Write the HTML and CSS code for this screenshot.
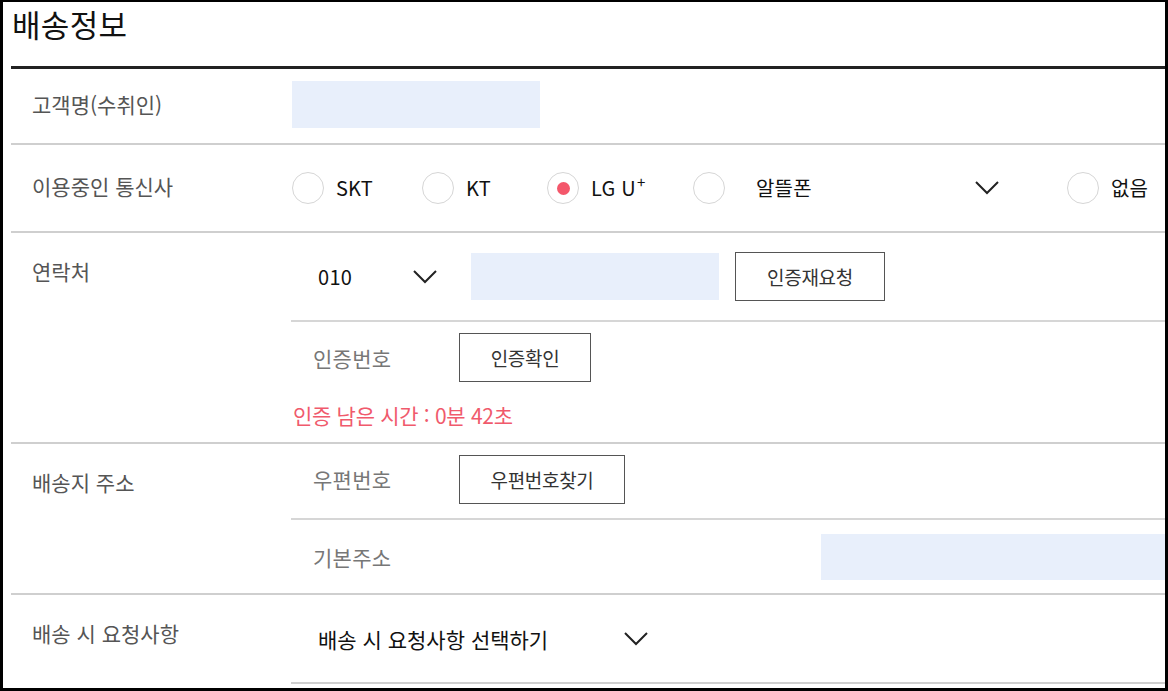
FILE: index.html
```html
<!DOCTYPE html>
<html lang="ko">
<head>
<meta charset="utf-8">
<title>배송정보</title>
<link rel="stylesheet" href="styles.css">
</head>
<body>
<div class="frame">
  <h1 class="title">배송정보</h1>
  <div class="table">
    <div class="row row-name">
      <div class="label label-name">고객명(수취인)</div>
      <div class="cell cell-name"><div class="input input-name"></div></div>
    </div>
    <div class="row row-carrier">
      <div class="label label-carrier">이용중인 통신사</div>
      <div class="cell cell-carrier">
        <label class="opt opt-skt"><span class="radio"></span><span class="opt-text">SKT</span></label>
        <label class="opt opt-kt"><span class="radio"></span><span class="opt-text">KT</span></label>
        <label class="opt opt-lg"><span class="radio checked"></span><span class="opt-text">LG U<sup>+</sup></span></label>
        <label class="opt opt-mvno"><span class="radio"></span><span class="opt-text mvno-text">알뜰폰</span>
          <svg class="chev" width="24" height="14" viewBox="0 0 24 14"><polyline points="1,1 12,12 23,1" fill="none" stroke="#222" stroke-width="2"/></svg>
        </label>
        <label class="opt opt-none"><span class="radio"></span><span class="opt-text">없음</span></label>
      </div>
    </div>
    <div class="row row-contact">
      <div class="label label-top">연락처</div>
      <div class="cell cell-stack">
        <div class="sub sub-phone">
          <div class="select select-phone"><span class="select-text">010</span>
            <svg class="chev" width="24" height="14" viewBox="0 0 24 14"><polyline points="1,1 12,12 23,1" fill="none" stroke="#222" stroke-width="2"/></svg>
          </div>
          <div class="input input-phone"></div>
          <button class="btn btn-resend">인증재요청</button>
        </div>
        <div class="sub sub-code">
          <div class="sub-line">
            <span class="sublabel">인증번호</span>
            <button class="btn btn-confirm">인증확인</button>
          </div>
          <p class="timer">인증 남은 시간 : 0분 42초</p>
        </div>
      </div>
    </div>
    <div class="row row-address">
      <div class="label label-top">배송지 주소</div>
      <div class="cell cell-stack">
        <div class="sub sub-zip">
          <span class="sublabel">우편번호</span>
          <button class="btn btn-zip">우편번호찾기</button>
        </div>
        <div class="sub sub-base">
          <span class="sublabel">기본주소</span>
          <div class="input input-addr"></div>
        </div>
      </div>
    </div>
    <div class="row row-request">
      <div class="label label-top">배송 시 요청사항</div>
      <div class="cell cell-request">
        <div class="select select-request"><span class="select-text request-text">배송 시 요청사항 선택하기</span>
          <svg class="chev" width="24" height="14" viewBox="0 0 24 14"><polyline points="1,1 12,12 23,1" fill="none" stroke="#222" stroke-width="2"/></svg>
        </div>
      </div>
    </div>
  </div>
</div>
</body>
</html>
```
FILE: styles.css
```css
* { box-sizing: border-box; }
html, body { margin: 0; padding: 0; background: #fff; }
body { font-family: "Noto Sans CJK KR", "Noto Sans", sans-serif; color: #111; }

.frame {
  width: 1168px;
  height: 691px;
  border-style: solid;
  border-color: #000;
  border-width: 2px 3px 3px 3px;
  overflow: hidden;
}

.title {
  margin: 0;
  height: 64px;
  padding-left: 9px;
  font-size: 31px;
  line-height: 44px;
  font-weight: 400;
  color: #111;
  letter-spacing: 0.3px;
}

.table {
  margin-left: 8px;
  border-top: 3px solid #222;
}

.row {
  display: flex;
  border-bottom: 2px solid #cfcfcf;
}

.label {
  width: 280px;
  flex: none;
  padding-left: 21px;
  font-size: 21px;
  line-height: 28px;
  color: #555;
}
.label-name { padding-top: 21px; }
.label-carrier { padding-top: 27px; }
.label-top { padding-top: 24px; }

.cell { flex: 1; display: flex; }

.row-name { height: 76px; }
.cell-name { padding: 12px 0 0 1px; }

.input { background: #e8effb; }
.input-name { width: 248px; height: 47px; }

.row-carrier { height: 88px; }
.cell-carrier { align-items: center; padding-left: 1px; }
.opt { display: flex; align-items: center; flex: none; }
.opt-skt { width: 130px; }
.opt-kt { width: 125px; }
.opt-lg { width: 146px; }
.opt-mvno { width: 374px; }
.opt-text { font-size: 20px; line-height: 28px; margin-left: 12px; color: #111; letter-spacing: 0.2px; }
.opt-text sup { font-size: 15px; line-height: 0; vertical-align: 8px; margin-left: 1px; }
.mvno-text { margin-left: 31px; width: 219px; }
.radio {
  width: 32px; height: 32px; border-radius: 50%;
  border: 1px solid #d6d6d6; flex: none;
  display: flex; align-items: center; justify-content: center;
}
.radio.checked::after {
  content: ""; width: 13px; height: 13px; border-radius: 50%; background: #f4576b;
}
.chev { display: block; flex: none; }

.row-contact { height: 211px; }
.cell-stack { flex-direction: column; }
.sub-phone {
  height: 89px;
  border-bottom: 2px solid #d6d6d6;
  display: flex; align-items: center;
}
.select { display: flex; align-items: center; }
.select-phone { width: 164px; padding-left: 27px; justify-content: space-between; padding-right: 18px; }
.select-text { font-size: 20px; line-height: 28px; color: #111; letter-spacing: 0.3px; }
.request-text { font-size: 21px; letter-spacing: 0; }
.input-phone { width: 248px; height: 47px; margin-left: 16px; }
.btn {
  font-family: "Noto Sans CJK KR", "Noto Sans", sans-serif;
  font-size: 19px; color: #333; background: #fff;
  border: 1px solid #555; padding: 0; cursor: pointer;
  letter-spacing: -0.3px;
}
.btn-resend { width: 150px; height: 49px; margin-left: 16px; }
.sub-code { padding-top: 11px; }
.sub-line { display: flex; align-items: center; }
.sublabel {
  width: 168px; flex: none; padding-left: 22px;
  font-size: 21px; line-height: 28px; color: #777; letter-spacing: 0.3px;
}
.btn-confirm { width: 132px; height: 49px; }
.timer {
  margin: 19px 0 0 2px;
  font-size: 21px; line-height: 28px; color: #f05a6c;
  letter-spacing: -0.3px;
}

.row-address { height: 151px; }
.sub-zip {
  height: 76px; border-bottom: 2px solid #d6d6d6;
  display: flex; align-items: flex-start; padding-top: 11px;
}
.sub-zip .sublabel { padding-top: 10px; }
.btn-zip { width: 166px; height: 49px; }
.sub-base { flex: 1; display: flex; align-items: center; }
.input-addr { width: 344px; height: 46px; margin-left: auto; }

.row-request { height: 89px; border-bottom: none; }
.cell-request { border-bottom: 2px solid #cfcfcf; align-items: center; }
.select-request { padding-left: 27px; }
.select-request .chev { margin-left: 76px; }
```
